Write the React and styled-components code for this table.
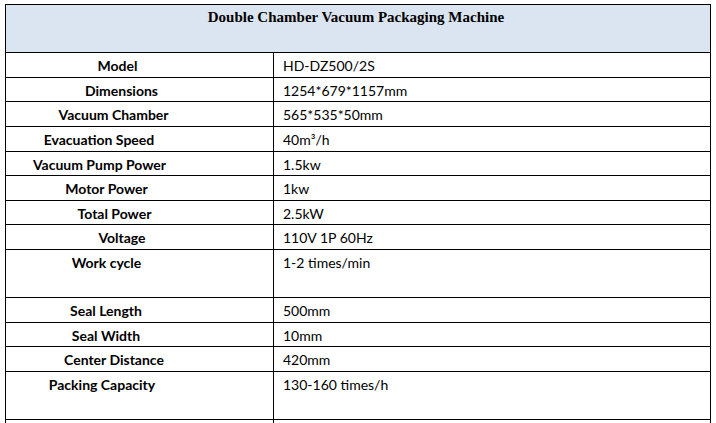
import React from 'react'
import styled, { createGlobalStyle } from 'styled-components'

const GlobalStyle = createGlobalStyle`
  html, body {
    margin: 0;
    padding: 0;
    background: #fff;
    overflow: hidden;
  }
`

// label padding-right shifts the centred label like the original doc does
const specs = [
  { label: 'Model', value: 'HD-DZ500/2S', shift: 44 },
  { label: 'Dimensions', value: '1254*679*1157mm', shift: 36 },
  { label: 'Vacuum Chamber', value: '565*535*50mm', shift: 52 },
  { label: 'Evacuation Speed', value: '40m³/h', shift: 81 },
  { label: 'Vacuum Pump Power', value: '1.5kw', shift: 80 },
  { label: 'Motor Power', value: '1kw', shift: 66 },
  { label: 'Total Power', value: '2.5kW', shift: 50 },
  { label: 'Voltage', value: '110V 1P 60Hz', shift: 35 },
  { label: 'Work cycle', value: '1-2 times/min', shift: 66, tall: true },
  { label: 'Seal Length', value: '500mm', shift: 67 },
  { label: 'Seal Width', value: '10mm', shift: 67 },
  { label: 'Center Distance', value: '420mm', shift: 51 },
  { label: 'Packing Capacity', value: '130-160 times/h', shift: 75, tall: true },
  { label: '', value: '', shift: 0 },
]

export default function App() {
  return (
    <>
      <GlobalStyle />
      <Table>
        <Title>Double Chamber Vacuum Packaging Machine</Title>
        {specs.map((spec, i) => (
          <Row key={i} $tall={spec.tall}>
            <Label $shift={spec.shift}>{spec.label}</Label>
            <Value>{spec.value}</Value>
          </Row>
        ))}
      </Table>
    </>
  )
}

const Table = styled.div`
  margin: 4px 0 0 5px;
  width: 706px;
  box-sizing: border-box;
  border: 1px solid #000;
  border-bottom: none;
  display: flex;
  flex-direction: column;
`

const Title = styled.div`
  height: 48px;
  box-sizing: border-box;
  background: #dbe5f1;
  border-bottom: 1px solid #000;
  font-family: 'Liberation Serif', 'Times New Roman', serif;
  font-weight: bold;
  font-size: 15px;
  color: #000;
  text-align: center;
  padding-top: 4px;
  padding-right: 4px;
`

const Row = styled.div`
  display: grid;
  grid-template-columns: 268px 1fr;
  height: ${p => (p.$tall ? '48px' : '24.65px')};
  flex-shrink: 0;
  box-sizing: border-box;
  border-bottom: 1px solid #000;
  font-family: Lato, 'Liberation Sans', sans-serif;
  font-size: 14px;
  color: #000;
`

const Label = styled.div`
  border-right: 1px solid #000;
  font-weight: bold;
  text-align: center;
  padding-top: 4px;
  padding-right: ${p => p.$shift}px;
  white-space: nowrap;
`

const Value = styled.div`
  padding: 4px 0 0 9px;
  white-space: nowrap;
`
